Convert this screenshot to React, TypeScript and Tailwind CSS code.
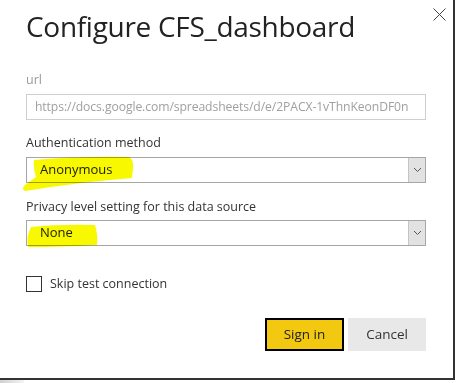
import React from "react";

function Chevron() {
  return (
    <svg width="9" height="6" viewBox="0 0 9 6" fill="none">
      <path d="M1 1 L4.5 4.5 L8 1" stroke="#555" strokeWidth="1" />
    </svg>
  );
}

function Select({ value }: { value: string }) {
  return (
    <div className="flex h-[26px] w-[400px] items-stretch border border-[#a6a6a6] bg-white">
      <div className="flex flex-1 items-center pl-[13px] text-[13px] text-[#222]">{value}</div>
      <div className="flex w-[17px] items-center justify-center border-l border-[#c4c4c4] bg-[#e2e2e2]">
        <Chevron />
      </div>
    </div>
  );
}

export default function App() {
  return (
    <div className="relative h-[383px] w-[464px] overflow-hidden bg-white font-['Open_Sans',sans-serif]">
      <div className="relative h-[380px] w-[455px] border-b-2 border-r-2 border-[#333] bg-white pl-[26px]">
        <button className="absolute left-[432px] top-[7px] flex h-[14px] w-[14px] items-center justify-center">
          <svg width="13" height="13" viewBox="0 0 13 13">
            <path d="M0.5 0.5 L12.5 12.5 M12.5 0.5 L0.5 12.5" stroke="#444" strokeWidth="1" />
          </svg>
        </button>
        <div className="pt-[12px] text-[28px] leading-[28px] text-[#222] tracking-[-0.3px]">Configure CFS_dashboard</div>

        <div className="mt-[32px] h-[16px] text-[12.5px] leading-[16px] text-[#9a9a9a]">url</div>
        <div className="mt-[6px] flex h-[26px] w-[400px] items-center overflow-hidden whitespace-nowrap border border-[#cfcfcf] pl-[8px] text-[12.2px] tracking-[-0.1px] text-[#a0a0a0]">
          https://docs.google.com/spreadsheets/d/e/2PACX-1vThnKeonDF0n
        </div>

        <div className="mt-[15px] h-[16px] text-[12.5px] leading-[16px] text-[#333]">Authentication method</div>
        <div className="mt-[6px]">
          <Select value="Anonymous" />
        </div>

        <div className="mt-[16px] h-[16px] text-[12.5px] leading-[16px] text-[#333]">Privacy level setting for this data source</div>
        <div className="mt-[5px]">
          <Select value="None" />
        </div>

        <label className="mt-[30px] flex h-[16px] items-center gap-[8px] text-[12.5px] text-[#333]">
          <span className="h-[16px] w-[16px] border border-[#333] bg-white" />
          <span>Skip test connection</span>
        </label>

        <div className="mt-[26px] flex w-[400px] justify-end gap-[4px]">
          <button className="h-[33px] w-[79px] border-2 border-black bg-[#f2c811] text-[13.5px] text-[#222]">Sign in</button>
          <button className="h-[33px] w-[78px] bg-[#e8e8e8] text-[13.5px] text-[#333]">Cancel</button>
        </div>
      </div>
      <div className="h-[3px] w-[24px] bg-gradient-to-r from-[#d0d0d0] to-[#f4f4f4]" />

      <svg className="pointer-events-none absolute left-0 top-0 mix-blend-multiply" width="464" height="383">
        <path
          d="M34 160 Q80 156 129 157 Q134 160 133 168 L132 178 Q80 182 25 191 Q21 189 25 185 L36 177 Q33 168 34 160 Z"
          fill="#f8f800"
        />
        <path
          d="M31 227 Q60 224 95 225 Q98 235 97 245 Q60 247 28 247 Q26 237 31 227 Z"
          fill="#f8f800"
        />
      </svg>
    </div>
  );
}
